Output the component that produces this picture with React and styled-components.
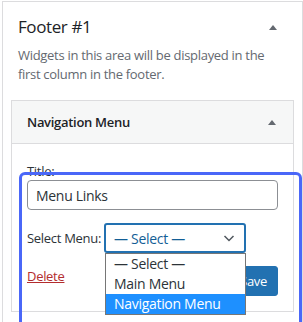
import React from "react";
import styled, { createGlobalStyle } from "styled-components";

const Global = createGlobalStyle`
  html, body { margin: 0; padding: 0; background: #fff; }
  body {
    font-family: "Open Sans", "Noto Sans", sans-serif;
    font-size: 13px;
    letter-spacing: -0.3px;
    color: #1d2327;
  }
  * { box-sizing: border-box; }
`;

const Panel = styled.div`
  margin: 1px 0 0 2px;
  width: 301px;
  min-height: 321px;
  border: 1px solid #dcdcde;
  border-bottom: none;
  padding: 0 8px;
`;

const PanelHeader = styled.div`
  display: flex;
  align-items: center;
  justify-content: space-between;
  padding: 13px 7px 0;
`;

const PanelTitle = styled.h2`
  margin: 0;
  font-size: 17px;
  line-height: 24px;
  font-weight: 500;
  letter-spacing: -0.4px;
  color: #1d2327;
`;

const Caret = styled.span`
  display: block;
  width: 0;
  height: 0;
  border-left: 4px solid transparent;
  border-right: 4px solid transparent;
  border-bottom: 5px solid #646970;
  margin-right: ${(p) => p.$right}px;
`;

const Description = styled.p`
  margin: 7px 0 16px;
  padding: 0 7px;
  font-size: 13px;
  line-height: 19px;
  color: #646970;
`;

const Widget = styled.div`
  border: 1px solid #dcdcde;
  background: #fff;
`;

const WidgetTop = styled.div`
  height: 43px;
  background: #f6f7f7;
  border-bottom: 1px solid #dcdcde;
  display: flex;
  align-items: center;
  justify-content: space-between;
  padding: 0 0 0 15px;
`;

const WidgetTitle = styled.h3`
  margin: 0;
  font-size: 13px;
  font-weight: 600;
  color: #1d2327;
`;

const WidgetBody = styled.div`
  position: relative;
  padding: 0 15px 15px;
  font-size: 13px;
  color: #2c3338;
`;

const Label = styled.label`
  display: block;
  margin-top: 18px;
  line-height: 18px;
`;

const TextInput = styled.div`
  height: 30px;
  border: 1px solid #8c8f94;
  border-radius: 4px;
  padding: 0 8px;
  display: flex;
  align-items: center;
  font-size: 14px;
  color: #2c3338;
`;

const SelectRow = styled.div`
  display: flex;
  align-items: center;
  gap: 3px;
  margin-top: 13px;
`;

const SelectWrap = styled.div`
  position: relative;
`;

const SelectBox = styled.div`
  width: 142px;
  height: 30px;
  border: 2px solid #2271b1;
  border-radius: 3px;
  padding: 0 8px;
  display: flex;
  align-items: center;
  justify-content: space-between;
  color: #135e96;
  font-size: 14px;
`;

const Dropdown = styled.ul`
  position: absolute;
  top: 100%;
  left: 1px;
  width: 141px;
  margin: 0;
  padding: 0;
  list-style: none;
  background: #fff;
  border: 1px solid #767676;
  z-index: 2;
`;

const Option = styled.li`
  height: 20px;
  line-height: 20px;
  padding-left: 8px;
  font-size: 14px;
  white-space: nowrap;
  background: ${(p) => (p.$active ? "#1e90ff" : "transparent")};
  color: ${(p) => (p.$active ? "#fff" : "#2c3338")};
`;

const Actions = styled.div`
  display: flex;
  align-items: flex-start;
  justify-content: space-between;
  margin-top: 13px;
`;

const DeleteLink = styled.a`
  font-size: 13px;
  line-height: 20px;
  color: #b32d2e;
  text-decoration: underline;
`;

const SaveButton = styled.button`
  height: 30px;
  padding: 0 10px;
  font-family: inherit;
  letter-spacing: inherit;
  font-size: 13px;
  color: #fff;
  background: #2271b1;
  border: 1px solid #2271b1;
  border-radius: 3px;
`;

const Highlight = styled.div`
  position: absolute;
  left: 7px;
  top: 10px;
  width: 283px;
  height: 166px;
  border: 3px solid #4a67f8;
  border-radius: 6px;
  pointer-events: none;
  z-index: 3;
`;

const Chevron = () => (
  <svg width="14" height="14" viewBox="0 0 14 14" fill="none">
    <path d="M2.5 5 L7 9.5 L11.5 5" stroke="#50575e" strokeWidth="1.5" />
  </svg>
);

export default function App() {
  return (
    <>
      <Global />
      <Panel>
        <PanelHeader>
          <PanelTitle>Footer #1</PanelTitle>
          <Caret $right={10} />
        </PanelHeader>
        <Description>
          Widgets in this area will be displayed in the first column in the footer.
        </Description>
        <Widget>
          <WidgetTop>
            <WidgetTitle>Navigation Menu</WidgetTitle>
            <Caret $right={17} />
          </WidgetTop>
          <WidgetBody>
            <Label>Title:</Label>
            <TextInput>Menu Links</TextInput>
            <SelectRow>
              <span>Select Menu:</span>
              <SelectWrap>
                <SelectBox>
                  <span>— Select —</span>
                  <Chevron />
                </SelectBox>
                <Dropdown>
                  <Option>— Select —</Option>
                  <Option>Main Menu</Option>
                  <Option $active>Navigation Menu</Option>
                </Dropdown>
              </SelectWrap>
            </SelectRow>
            <Actions>
              <DeleteLink>Delete</DeleteLink>
              <SaveButton>Save</SaveButton>
            </Actions>
            <Highlight />
          </WidgetBody>
        </Widget>
      </Panel>
    </>
  );
}
